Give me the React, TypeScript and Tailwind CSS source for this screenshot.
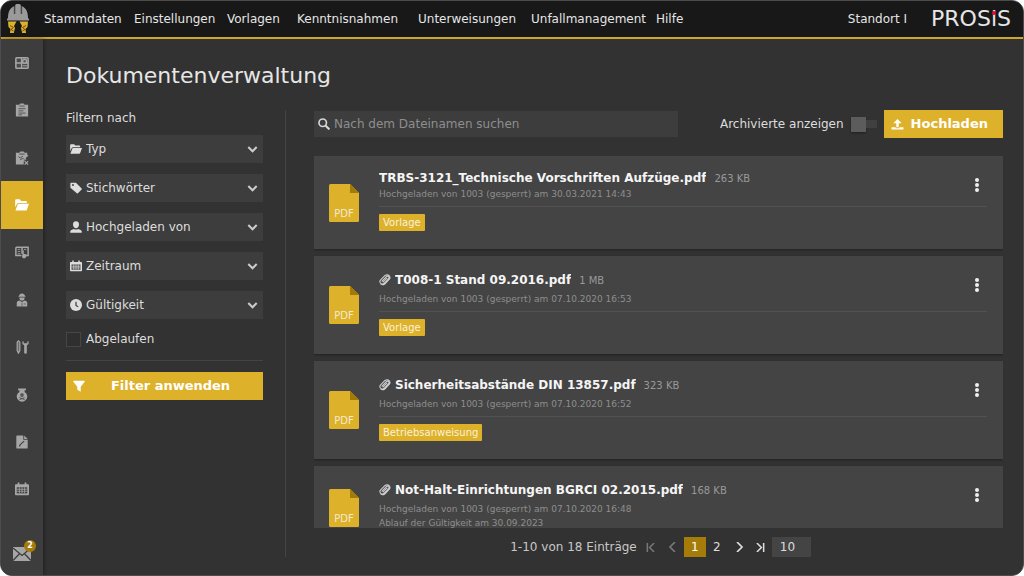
import React from "react";

type IconProps = { className?: string };

const HelmetLogo = () => (
  <svg viewBox="0 0 26 30" className="h-[30px] w-[26px] shrink-0" aria-hidden="true">
    <path d="M3 14C3 7 5.500 3.500 9.200 2.200V10h1V1.200Q10.500 0 12 0h2q1.500 0 1.800 1.200V10h1V2.200C20.500 3.500 23 7 23 14l1 1v1.500H2V15z" fill="#9a9a9a" />
    <path d="M9.200 2.200V10M16.800 2.200V10" stroke="#5d5d5d" strokeWidth=".8" />
    <path d="M3 17.500h8.500L9 22l1 2-1.200 5H5l.5-4L3.500 23z" fill="#deb12b" />
    <path d="M23 17.500h-8.500L17 22l-1 2 1.200 5H21l-.5-4 2-2z" fill="#deb12b" />
    <path d="M5 21.500l3.500 2-2.500 2 2.500 1.500M21 21.500l-3.500 2 2.500 2-2.500 1.500" stroke="#5a4712" strokeWidth=".9" fill="none" />
  </svg>
);

const DashboardIcon = ({ className }: IconProps) => (
  <svg viewBox="0 0 16 14" className={className} aria-hidden="true">
    <rect x="1" y="1" width="14" height="12" rx="1" fill="#4a4a4a" stroke="currentColor" strokeWidth="1.800" />
    <path d="M1 7h14M7.500 1v12" stroke="currentColor" strokeWidth="1.600" />
    <circle cx="11" cy="5" r="2.300" fill="#5a5a5a" stroke="currentColor" strokeWidth="1.500" />
    <path d="M9 10.200h5" stroke="currentColor" strokeWidth="1.300" />
  </svg>
);

const ClipboardIcon = ({ className }: IconProps) => (
  <svg viewBox="0 0 16 16" className={className} aria-hidden="true">
    <path d="M1 2h4l1-1.500h4L11 2h4v13.500H1z" fill="currentColor" />
    <path d="M5 3.500h6M4 6.500h8M4 9h5.500M4 11.500h8M4 13.500h4" stroke="#444" strokeWidth=".9" />
  </svg>
);

const ClipboardXIcon = ({ className }: IconProps) => (
  <svg viewBox="0 0 16 16" className={className} aria-hidden="true">
    <path d="M1 2h4l1-1.500h4L11 2h3v3l-2 2.500L13 10l-3 1v4.500H1z" fill="currentColor" />
    <path d="M5 3.500h6M4 6.500l2 1.500 3-2M6 10l3-1.500 3 1" stroke="#444" fill="none" />
    <path d="M11 11.500l4 4M15 11.500l-4 4M10 9l5-4" stroke="currentColor" strokeWidth="1.400" />
  </svg>
);

const FolderIcon = ({ className }: IconProps) => (
  <svg viewBox="0 0 16 14" className={className} aria-hidden="true">
    <path d="M.2 9.500V1.500q0-1 1-1h4.300L7 2.300h5.500q1 0 1 1v1.300H4q-1.200 0-1.700 1z" fill="currentColor" />
    <path d="M4.300 5.500H16l-2.400 6.800q-.4 1-1.400 1H.5l2.500-6.800q.3-1 1.300-1z" fill="currentColor" />
  </svg>
);

const TrainingIcon = ({ className }: IconProps) => (
  <svg viewBox="0 0 16 14" className={className} aria-hidden="true">
    <path d="M1 1.500h6l1 .8 1-.8h6v9.500h-3M1 1.500V11h6M8 2v7" fill="none" stroke="currentColor" strokeWidth="1.700" />
    <path d="M3 4h3M3 6.500h3M10 4h3M3 9h3" stroke="currentColor" />
    <path d="M8.500 5.500q1-1 1.500 0V9l3 .8V12l-1.500 2H9l-2-3.500 1.500.5z" fill="currentColor" />
  </svg>
);

const WorkerIcon = ({ className }: IconProps) => (
  <svg viewBox="0 0 16 16" className={className} aria-hidden="true">
    <path d="M4.500 3.500C5 1.500 6 .5 8 .5s3 1 3.500 3H12v.9H4v-.9z" fill="currentColor" />
    <path d="M5 5h6c0 2.500-1.200 3.700-3 3.700S5 7.500 5 5z" fill="currentColor" />
    <path d="M2 15.500V11q0-2 3-2.300l3 1.500 3-1.500Q14 9 14 11v4.500z" fill="currentColor" />
    <path d="M8 11v4.500M10 12.500h2.500" stroke="#555" strokeWidth=".8" />
  </svg>
);

const ToolsIcon = ({ className }: IconProps) => (
  <svg viewBox="0 0 16 16" className={className} aria-hidden="true">
    <path d="M2.500 2.500L4 1l1.500 1.500V12L4 15l-1.500-3z" fill="#6a6a6a" stroke="currentColor" strokeWidth="1.400" />
    <path d="M8.500 1v3.500L10.500 6v8.200a1.500 1.500 0 003 0V6l2-1.500V1l-1.500 1v1.800h-4V2z" fill="currentColor" />
  </svg>
);

const HazardIcon = ({ className }: IconProps) => (
  <svg viewBox="0 0 16 16" className={className} aria-hidden="true">
    <path d="M3.500.5h9v2H11v2a6 6 0 11-6 0v-2H3.500z" fill="currentColor" />
    <path d="M6 8a2 2 0 014 0l-.8 1.900H6.800z" fill="#444" />
    <path d="M5 11l6 2.300M11 11l-6 2.300" stroke="#444" strokeWidth=".9" />
    <path d="M6.800 8.200h.8M8.500 8.200h.8" stroke="currentColor" strokeWidth=".8" />
  </svg>
);

const NoteIcon = ({ className }: IconProps) => (
  <svg viewBox="0 0 16 16" className={className} aria-hidden="true">
    <path d="M2.500.5h7V5.500H14.500v9q0 1-1 1h-11q-1 0-1-1v-13q0-1 1-1z" fill="currentColor" />
    <path d="M10.500.5L14.500 4.500h-4z" fill="currentColor" />
    <path d="M5 13l1-2 4.500-4" stroke="#444" strokeWidth="1.400" fill="none" />
  </svg>
);

const CalendarIcon = ({ className }: IconProps) => (
  <svg viewBox="0 0 16 16" className={className} aria-hidden="true">
    <path d="M1 2.500h2V.500h2v2h6v-2h2v2h2q1 0 1 1V14q0 1-1 1H1q-1 0-1-1V3.500q0-1 1-1z" fill="currentColor" />
    <path d="M2 6h12v7H2z" fill="#404040" />
    <path d="M5 6v7M8 6v7M11 6v7M2 8.300h12M2 10.600h12" stroke="currentColor" strokeWidth=".9" />
  </svg>
);

const MailIcon = ({ className }: IconProps) => (
  <svg viewBox="0 0 18 14" className={className} aria-hidden="true">
    <rect width="18" height="14" fill="currentColor" />
    <path d="M0 1l9 7.500L18 1M0 13.500l6.500-6.800M18 13.500l-6.500-6.800" stroke="#3d3d3d" strokeWidth="1.300" fill="none" />
  </svg>
);

const TagIcon = ({ className }: IconProps) => (
  <svg viewBox="0 0 16 16" className={className} aria-hidden="true">
    <path fillRule="evenodd" d="M.5 2Q.5 1 1.500 1H8l7.500 7.500q.7.700 0 1.400l-5 5q-.7.700-1.400 0L.5 7.500zM4 2.800a1.300 1.300 0 100 2.600 1.300 1.300 0 000-2.600z" fill="currentColor" />
  </svg>
);

const UserIcon = ({ className }: IconProps) => (
  <svg viewBox="0 0 16 16" className={className} aria-hidden="true">
    <path d="M8 .3c2.500 0 4 1.500 4 4.200S10.200 9.700 8 9.700 4 7.200 4 4.500 5.500.3 8 .3z" fill="currentColor" />
    <path d="M.3 15.700v-2q.5-2 4.700-3 3 1.500 6 0 4.200 1 4.700 3v2z" fill="currentColor" />
  </svg>
);

const ClockIcon = ({ className }: IconProps) => (
  <svg viewBox="0 0 16 16" className={className} aria-hidden="true">
    <circle cx="8" cy="8" r="8" fill="currentColor" />
    <path d="M8 3.500V8.500l3 2" stroke="#3b3b3b" strokeWidth="1.600" fill="none" />
  </svg>
);

const FunnelIcon = ({ className }: IconProps) => (
  <svg viewBox="0 0 16 16" className={className} aria-hidden="true">
    <path d="M.7 1h14.600q.8.600 0 1.500L10.300 9v6.500L5.700 13V9L.7 2.500Q-.1 1.600.7 1z" fill="currentColor" />
  </svg>
);

const SearchIcon = ({ className }: IconProps) => (
  <svg viewBox="0 0 16 16" className={className} aria-hidden="true">
    <circle cx="6.300" cy="6.300" r="5" fill="none" stroke="currentColor" strokeWidth="2.200" />
    <path d="M10.200 10.200L15.200 15.200" stroke="currentColor" strokeWidth="2.800" />
  </svg>
);

const UploadIcon = ({ className }: IconProps) => (
  <svg viewBox="0 0 14 12" className={className} aria-hidden="true">
    <path d="M7 0l4.500 4.500H8.300V9H5.700V4.500H2.500z" fill="currentColor" />
    <path d="M.5 9H5v1h4V9h4.500v2.500H.5z" fill="currentColor" />
  </svg>
);

const ClipIcon = ({ className }: IconProps) => (
  <svg viewBox="0 0 16 16" className={className} aria-hidden="true">
    <path
      d="M4 9.500l5.800-6a2 2 0 013 2.800L7 12.300a3.300 3.300 0 01-4.800-4.600L8 2q3-2 5.500 0 2.200 2.400.3 5L8 13q-3 2.500-5.500.5M5.500 10.500l5-5"
      fill="none"
      stroke="currentColor"
      strokeWidth="1.400"
      strokeLinecap="round"
    />
  </svg>
);

const ChevronDown = ({ className }: IconProps) => (
  <svg viewBox="0 0 12 8" className={className} aria-hidden="true">
    <path d="M1.200 1.200L6 6l4.800-4.800" fill="none" stroke="currentColor" strokeWidth="2.300" />
  </svg>
);

const Arrow = ({ d, className }: { d: string; className?: string }) => (
  <svg viewBox="0 0 10 10" className={className} aria-hidden="true">
    <path d={d} fill="none" stroke="currentColor" strokeWidth="1.700" />
  </svg>
);

const menu = ["Stammdaten", "Einstellungen", "Vorlagen", "Kenntnisnahmen", "Unterweisungen", "Unfallmanagement", "Hilfe"];

const sidebar = [
  { label: "Übersicht", Icon: DashboardIcon },
  { label: "Aufgaben", Icon: ClipboardIcon },
  { label: "Mängel", Icon: ClipboardXIcon },
  { label: "Dokumente", Icon: FolderIcon, active: true },
  { label: "Schulungen", Icon: TrainingIcon },
  { label: "Mitarbeiter", Icon: WorkerIcon },
  { label: "Arbeitsmittel", Icon: ToolsIcon },
  { label: "Gefahrstoffe", Icon: HazardIcon },
  { label: "Notizen", Icon: NoteIcon },
  { label: "Kalender", Icon: CalendarIcon },
];

const filters = [
  { label: "Typ", Icon: FolderIcon },
  { label: "Stichwörter", Icon: TagIcon },
  { label: "Hochgeladen von", Icon: UserIcon },
  { label: "Zeitraum", Icon: CalendarIcon },
  { label: "Gültigkeit", Icon: ClockIcon },
];

type Doc = { name: string; size: string; date: string; tag?: string; linked?: boolean; expires?: string };

const docs: Doc[] = [
  { name: "TRBS-3121_Technische Vorschriften Aufzüge.pdf", size: "263 KB", date: "30.03.2021 14:43", tag: "Vorlage" },
  { name: "T008-1 Stand 09.2016.pdf", size: "1 MB", date: "07.10.2020 16:53", tag: "Vorlage", linked: true },
  { name: "Sicherheitsabstände DIN 13857.pdf", size: "323 KB", date: "07.10.2020 16:52", tag: "Betriebsanweisung", linked: true },
  { name: "Not-Halt-Einrichtungen BGRCI 02.2015.pdf", size: "168 KB", date: "07.10.2020 16:48", linked: true, expires: "30.09.2023" },
];

const DocumentCard = ({ doc }: { doc: Doc }) => (
  <li className="flex shrink-0 bg-[#444444] pl-[15px] pr-4 shadow-[0_1px_2px_rgba(0,0,0,0.35)]">
    <div className="relative h-[38px] w-[30px] shrink-0 self-center">
      <svg viewBox="0 0 30 38" className="h-full w-full" aria-hidden="true">
        <path d="M1.500 0H21l9 9v27.500q0 1.500-1.500 1.500h-27Q0 38 0 36.500v-35Q0 0 1.500 0z" fill="#deb12b" />
        <path d="M21 0l9 9h-9z" fill="#a27a08" />
      </svg>
      <span className="absolute inset-x-0 bottom-0 text-center text-[10px] leading-4 text-[#f4ead0]">PDF</span>
    </div>
    <div
      className={`relative ml-5 min-w-0 flex-1 ${doc.linked ? "pt-[14px]" : "pt-[13px]"} ${doc.tag ? "pb-[18px]" : "pb-5"}`}
    >
      <div className="flex items-center">
        {doc.linked && <ClipIcon className="mr-1 h-3 w-3 shrink-0 text-[#d0d0d0]" />}
        <h2 className={`truncate text-[12px] font-bold text-[#f5f5f5] ${doc.linked ? "leading-5" : "leading-[18px]"}`}>{doc.name}</h2>
        <span className="ml-2 shrink-0 text-[10px] text-[#999999]">{doc.size}</span>
      </div>
      <div className={`text-[9px] leading-[14px] text-[#8e8e8e] ${doc.linked ? "pt-[2px]" : ""}`}>
        <p>Hochgeladen von 1003 (gesperrt) am {doc.date}</p>
        {doc.expires && <p>Ablauf der Gültigkeit am {doc.expires}</p>}
      </div>
      {doc.tag && (
        <div className="mt-[5px] flex border-t border-[#515151] pt-[7px]">
          <span className="rounded-[1px] bg-[#deb12b] px-1 text-[10px] leading-[17px] text-[#faf2dc]">{doc.tag}</span>
        </div>
      )}
      <button
        type="button"
        aria-label={`Aktionen für ${doc.name}`}
        className="absolute right-0 top-[19px] flex h-5 w-5 flex-col items-center justify-center gap-px"
      >
        <span className="h-1 w-1 rounded-full bg-[#f0f0f0]" />
        <span className="h-1 w-1 rounded-full bg-[#f0f0f0]" />
        <span className="h-1 w-1 rounded-full bg-[#f0f0f0]" />
      </button>
    </div>
  </li>
);

export default function App() {
  return (
    <div className="h-screen bg-white font-['DejaVu_Sans',Verdana,sans-serif] text-[12px] text-[#dddddd]">
      <div className="flex h-full flex-col overflow-hidden rounded-xl border border-[#4c4c4c] bg-[#323232]">
        <header className="flex h-[38px] shrink-0 items-center border-b-2 border-[#cfa52a] bg-[#181818] pl-1 pr-3">
          <HelmetLogo />
          <nav className="ml-[13px] grid grid-cols-[90px_93px_70px_121px_113px_125px_auto] whitespace-nowrap">
            {menu.map((item) => (
              <a key={item} href="#" className="leading-5 text-[#e6e6e6]">
                {item}
              </a>
            ))}
          </nav>
          <span className="ml-auto text-[#e6e6e6]">Standort I</span>
          <div className="ml-6 text-[22px] leading-5 text-[#e6e6e6]">
            PROS
            <span className="relative">
              i<span className="absolute left-px top-[5px] h-1 w-1 rounded-full bg-[#e30a2c]" />
            </span>
            S
          </div>
        </header>

        <div className="flex min-h-0 flex-1">
          <aside className="flex w-[42px] shrink-0 flex-col bg-[#3d3d3d] shadow-[1px_0_4px_rgba(0,0,0,0.4)]">
            <nav className="flex flex-1 flex-col">
              {sidebar.map(({ label, Icon, active }) => (
                <a
                  key={label}
                  href="#"
                  aria-label={label}
                  className={`flex flex-1 items-center justify-center ${active ? "bg-[#deb12b] text-white" : "text-[#a6a6a6]"}`}
                >
                  <Icon className="h-[14px] w-[14px]" />
                </a>
              ))}
            </nav>
            <a href="#" aria-label="Nachrichten" className="flex h-[62px] items-center justify-center pt-5 text-[#a6a6a6]">
              <span className="relative">
                <MailIcon className="h-[14px] w-[18px]" />
                <span className="absolute -right-[5px] -top-[7px] h-3 w-3 rounded-full bg-[#a57c0a] text-center text-[8px] font-bold leading-3 text-white">
                  2
                </span>
              </span>
            </a>
          </aside>

          <main className="flex min-w-0 flex-1 flex-col pb-[18px] pl-[23px] pr-5 pt-[21px]">
            <h1 className="text-[22px] leading-8 text-[#e6e6e6]">Dokumentenverwaltung</h1>

            <div className="mt-[18px] flex min-h-0 flex-1">
              <form className="w-[197px] shrink-0">
                <h2 className="leading-4">Filtern nach</h2>
                <div className="mt-[9px] flex flex-col gap-[11px]">
                  {filters.map(({ label, Icon }) => (
                    <div key={label} className="flex h-7 items-center bg-[#3d3d3d] pl-1 pr-[5px]">
                      <Icon className="h-3 w-3 shrink-0" />
                      <select aria-label={label} className="ml-1 min-w-0 flex-1 appearance-none bg-transparent outline-none">
                        <option>{label}</option>
                      </select>
                      <ChevronDown className="h-[7px] w-[11px] shrink-0 text-[#cccccc]" />
                    </div>
                  ))}
                </div>
                <label className="mt-3 flex items-center gap-[5px] leading-4">
                  <input type="checkbox" className="h-[15px] w-[15px] appearance-none border border-[#464646] bg-[#2f2f2f] checked:bg-[#deb12b]" />
                  Abgelaufen
                </label>
                <hr className="mt-[13px] border-[#444444]" />
                <button type="button" className="mt-[11px] flex h-7 w-full items-center bg-[#deb12b] pl-[7px] text-[13px] font-bold text-white">
                  <FunnelIcon className="h-3 w-3 shrink-0" />
                  <span className="flex-1 pr-[7px] text-center">Filter anwenden</span>
                </button>
              </form>

              <div className="ml-[22px] w-px shrink-0 bg-[#444444]" />

              <section className="ml-7 flex min-w-0 flex-1 flex-col">
                <div className="flex h-7 shrink-0 items-center">
                  <label className="flex h-[26px] w-[364px] items-center bg-[#3d3d3d] pl-1">
                    <SearchIcon className="h-3 w-3 shrink-0 text-[#d6d6d6]" />
                    <input
                      type="search"
                      aria-label="Nach dem Dateinamen suchen"
                      placeholder="Nach dem Dateinamen suchen"
                      className="ml-1 min-w-0 flex-1 bg-transparent outline-none placeholder:text-[#8e8e8e]"
                    />
                  </label>
                  <label className="ml-auto flex items-center gap-[7px]">
                    Archivierte anzeigen
                    <input type="checkbox" role="switch" className="sr-only" />
                    <span className="flex h-4 w-[26px] items-center">
                      <span className="h-[15px] w-[15px] bg-[#5c5c5c] shadow-[0_1px_2px_rgba(0,0,0,0.4)]" />
                      <span className="h-2 flex-1 bg-[#404040]" />
                    </span>
                  </label>
                  <button type="button" className="ml-[7px] flex h-7 items-center bg-[#deb12b] pl-[7px] pr-[15px] text-[13px] font-bold text-white">
                    <UploadIcon className="mr-[7px] h-[11px] w-[13px]" />
                    Hochladen
                  </button>
                </div>

                <ul className="mt-[18px] flex min-h-0 flex-1 flex-col gap-[7px] overflow-hidden">
                  {docs.map((doc) => (
                    <DocumentCard key={doc.name} doc={doc} />
                  ))}
                </ul>

                <div className="mt-[9px] flex h-5 shrink-0 items-center justify-center pl-1 text-[12px]">
                  <span className="mr-[9px] text-[#c8c8c8]">1-10 von 18 Einträge</span>
                  <button type="button" disabled aria-label="Erste Seite" className="flex w-[22px] justify-start text-[#777777]">
                    <Arrow d="M1.500 0v10M9 0L4 5l5 5" className="h-[9px] w-[9px]" />
                  </button>
                  <button type="button" disabled aria-label="Vorherige Seite" className="flex w-4 justify-start text-[#777777]">
                    <Arrow d="M7 0L2 5l5 5" className="h-[10px] w-[10px]" />
                  </button>
                  <button type="button" className="h-5 w-[22px] bg-[#a57c0a] text-white">1</button>
                  <button type="button" className="h-5 w-[22px]">2</button>
                  <button type="button" aria-label="Nächste Seite" className="flex w-[22px] justify-center">
                    <Arrow d="M3 0l5 5-5 5" className="h-[10px] w-[10px]" />
                  </button>
                  <button type="button" aria-label="Letzte Seite" className="flex w-[22px] justify-center">
                    <Arrow d="M8.500 0v10M1 0l5 5-5 5" className="h-[9px] w-[9px]" />
                  </button>
                  <select aria-label="Einträge pro Seite" className="h-5 w-[39px] appearance-none bg-[#444444] pl-2 outline-none">
                    <option>10</option>
                    <option>20</option>
                  </select>
                </div>
              </section>
            </div>
          </main>
        </div>
      </div>
    </div>
  );
}
